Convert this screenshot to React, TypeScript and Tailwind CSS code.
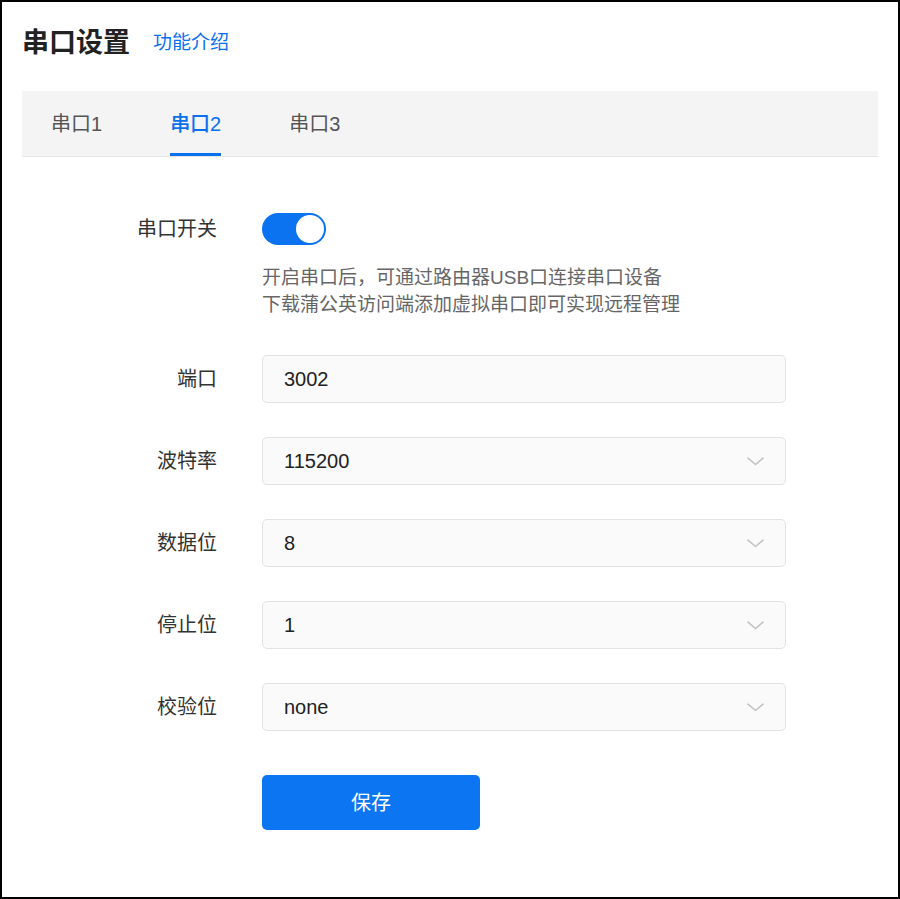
import { useState } from "react";

const fontStack =
  "font-['Liberation_Sans','Noto_Sans_CJK_SC',sans-serif]";

const tabs = ["串口1", "串口2", "串口3"];

const selects = [
  { label: "波特率", value: "115200" },
  { label: "数据位", value: "8" },
  { label: "停止位", value: "1" },
  { label: "校验位", value: "none" },
];

function Chevron() {
  return (
    <svg width="17" height="9" viewBox="0 0 17 9" fill="none">
      <path
        d="M1 1.2 L8.5 7.5 L16 1.2"
        stroke="#c2c2c2"
        strokeWidth="1.6"
        strokeLinecap="round"
        strokeLinejoin="round"
      />
    </svg>
  );
}

function Field({ children, select }: { children: React.ReactNode; select?: boolean }) {
  return (
    <div className="w-[524px] h-[48px] rounded-[5px] border border-[#e2e2e2] bg-[#fafafa] flex items-center justify-between pl-[21px] pr-[21px] text-[20px] text-[#222]">
      <span>{children}</span>
      {select && <Chevron />}
    </div>
  );
}

export default function App() {
  const [active, setActive] = useState(1);
  const [enabled, setEnabled] = useState(true);

  return (
    <div className={`w-[900px] h-[899px] border-2 border-black bg-white px-[20px] ${fontStack}`}>
      <div className="flex items-center gap-[23px] h-[40px] mt-[21px] mb-[28px]">
        <h1 className="text-[27px] font-semibold text-[#222] leading-[40px]">串口设置</h1>
        <a className="text-[19px] text-[#0b70ee] leading-[40px] cursor-pointer">功能介绍</a>
      </div>

      <div className="h-[66px] bg-[#f4f4f4] border-b border-[#e6e6e6] flex pl-[29px] gap-[68px]">
        {tabs.map((t, i) => (
          <button
            key={t}
            onClick={() => setActive(i)}
            className={`relative h-full flex items-center text-[20px] ${
              i === active ? "text-[#0b70ee] font-medium" : "text-[#555]"
            }`}
          >
            {t}
            {i === active && (
              <span className="absolute left-0 right-0 bottom-0 h-[3px] bg-[#0b70ee]" />
            )}
          </button>
        ))}
      </div>

      <div className="mt-[56px] flex flex-col">
        <div className="flex gap-[45px]">
          <div className="w-[195px] h-[32px] flex items-center justify-end text-[20px] text-[#333]">
            串口开关
          </div>
          <div className="flex flex-col">
            <button
              onClick={() => setEnabled(!enabled)}
              className={`w-[64px] h-[32px] rounded-full p-[2px] flex ${
                enabled ? "bg-[#0b72f0] justify-end" : "bg-[#d0d0d0] justify-start"
              }`}
            >
              <span className="w-[28px] h-[28px] rounded-full bg-white" />
            </button>
            <p className="mt-[19px] text-[19px] leading-[27px] text-[#666]">
              开启串口后，可通过路由器USB口连接串口设备
              <br />
              下载蒲公英访问端添加虚拟串口即可实现远程管理
            </p>
          </div>
        </div>

        <div className="flex gap-[45px] mt-[37px]">
          <div className="w-[195px] leading-[48px] text-right text-[20px] text-[#333]">端口</div>
          <Field>3002</Field>
        </div>

        {selects.map((s) => (
          <div key={s.label} className="flex gap-[45px] mt-[34px]">
            <div className="w-[195px] leading-[48px] text-right text-[20px] text-[#333]">
              {s.label}
            </div>
            <Field select>{s.value}</Field>
          </div>
        ))}

        <div className="flex gap-[45px] mt-[44px]">
          <div className="w-[195px]" />
          <button className="w-[218px] h-[55px] rounded-[5px] bg-[#0b75f2] text-white text-[20px]">
            保存
          </button>
        </div>
      </div>
    </div>
  );
}
